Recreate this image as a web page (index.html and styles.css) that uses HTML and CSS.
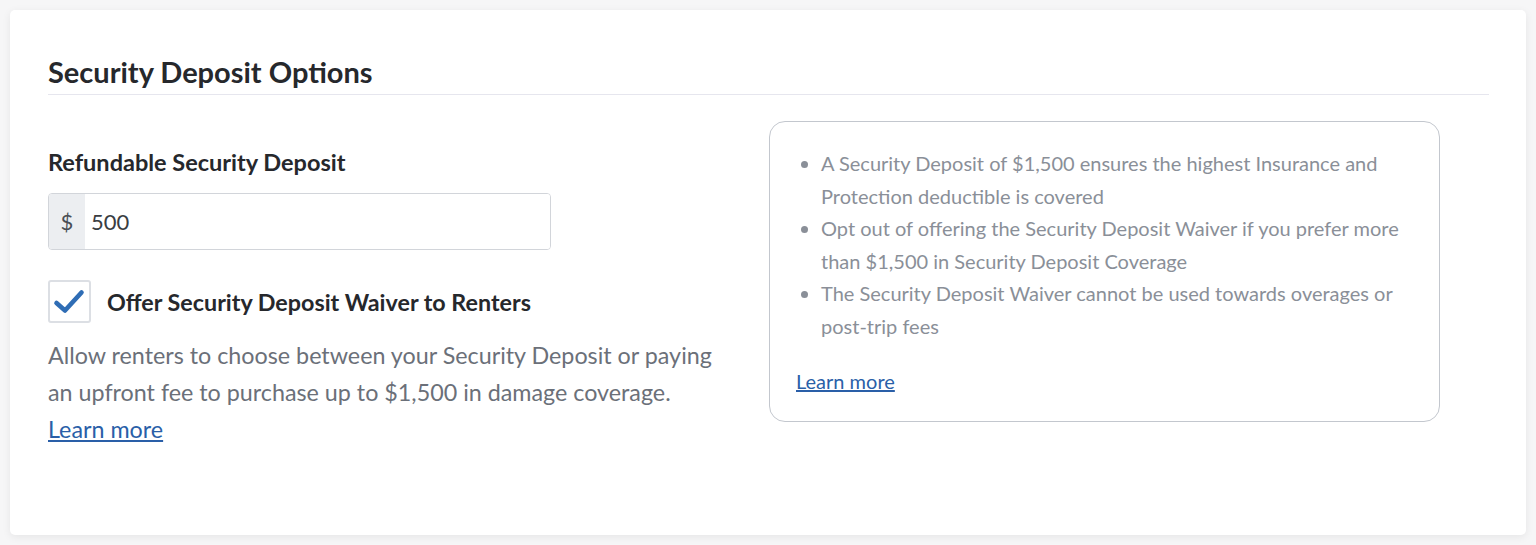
FILE: index.html
```html
<!DOCTYPE html>
<html lang="en">

<head>
    <meta charset="UTF-8">
    <meta name="viewport" content="width=device-width, initial-scale=1.0">
    <title>Security Deposit Options</title>
    <link rel="stylesheet" href="styles.css">
</head>

<body>
    <div class="card">
        <h2 class="card-title">Security Deposit Options</h2>
        <div class="columns">
            <div class="left-col">
                <label class="field-label" for="deposit">Refundable Security Deposit</label>
                <div class="input-group">
                    <span class="input-prefix">$</span>
                    <input class="input-field" id="deposit" type="text" value="500">
                </div>
                <div class="check-row">
                    <span class="checkbox">
                        <svg width="39" height="39" viewBox="0 0 39 39">
                            <path d="M6.5 21 L15 28.5 L31.5 10.5" fill="none" stroke="#2f6db5" stroke-width="4.6" stroke-linecap="round" stroke-linejoin="round"/>
                        </svg>
                    </span>
                    <span class="check-label">Offer Security Deposit Waiver to Renters</span>
                </div>
                <p class="help-text">
                    Allow renters to choose between your Security Deposit or paying
                    an upfront fee to purchase up to $1,500 in damage coverage.
                    <br><a href="#">Learn more</a>
                </p>
            </div>
            <div class="right-col">
                <div class="info-box">
                    <ul>
                        <li>A Security Deposit of $1,500 ensures the highest Insurance and Protection deductible is covered</li>
                        <li>Opt out of offering the Security Deposit Waiver if you prefer more than $1,500 in Security Deposit Coverage</li>
                        <li>The Security Deposit Waiver cannot be used towards overages or post-trip fees</li>
                    </ul>
                    <a href="#">Learn more</a>
                </div>
            </div>
        </div>
    </div>
</body>

</html>
```

FILE: styles.css
```css
body {
    background-color: #f6f6f7;
    color: #26282c;
    font-family: Lato, "Open Sans", sans-serif;
    margin: 0;
    padding: 10px;
}

.card {
    background-color: #FFFFFF;
    border-radius: 5px;
    box-shadow: 0 2px 8px rgba(0, 0, 0, 0.07);
    height: 525px;
    box-sizing: border-box;
    padding: 46px 37px 0 38px;
}

.card-title {
    font-size: 29px;
    font-weight: 700;
    line-height: 32px;
    margin: 0;
    padding-bottom: 6px;
    border-bottom: 1px solid #e6e6ee;
}

.columns {
    display: grid;
    grid-template-columns: 721px 1fr;
    margin-top: 26px;
}

.left-col {
    padding-top: 26px;
}

.field-label {
    display: block;
    font-size: 23.5px;
    font-weight: 700;
    line-height: 30px;
}

.input-group {
    display: flex;
    width: 503px;
    height: 57px;
    box-sizing: border-box;
    border: 1px solid #d2d5da;
    border-radius: 4px;
    overflow: hidden;
    margin-top: 16px;
}

.input-prefix {
    background-color: #eceef1;
    color: #4a4e55;
    width: 36px;
    display: flex;
    align-items: center;
    justify-content: center;
    font-size: 22px;
}

.input-field {
    flex: 1;
    border: none;
    outline: none;
    font-family: inherit;
    font-size: 22px;
    color: #3a3d42;
    padding: 0 6px;
}

.check-row {
    display: flex;
    align-items: center;
    margin-top: 30px;
}

.checkbox {
    width: 43px;
    height: 43px;
    box-sizing: border-box;
    border: 2px solid #dcdfe4;
    border-radius: 3px;
    display: flex;
    align-items: center;
    justify-content: center;
}

.check-label {
    font-size: 23.3px;
    font-weight: 700;
    margin-left: 16px;
}

.help-text {
    color: #6b7079;
    font-size: 23.3px;
    line-height: 37px;
    margin: 14px 0 0 0;
    max-width: 690px;
}

a {
    color: #2a5fa8;
    text-decoration: underline;
}

.info-box {
    width: 671px;
    height: 301px;
    box-sizing: border-box;
    border: 1.5px solid #c3c7ce;
    border-radius: 16px;
    padding: 25px 26px 0 26px;
    color: #8a8f98;
    font-size: 20px;
    line-height: 32.5px;
}

.info-box ul {
    margin: 0 0 23px 0;
    padding-left: 25px;
}

.info-box a {
    font-size: 20px;
}
```
